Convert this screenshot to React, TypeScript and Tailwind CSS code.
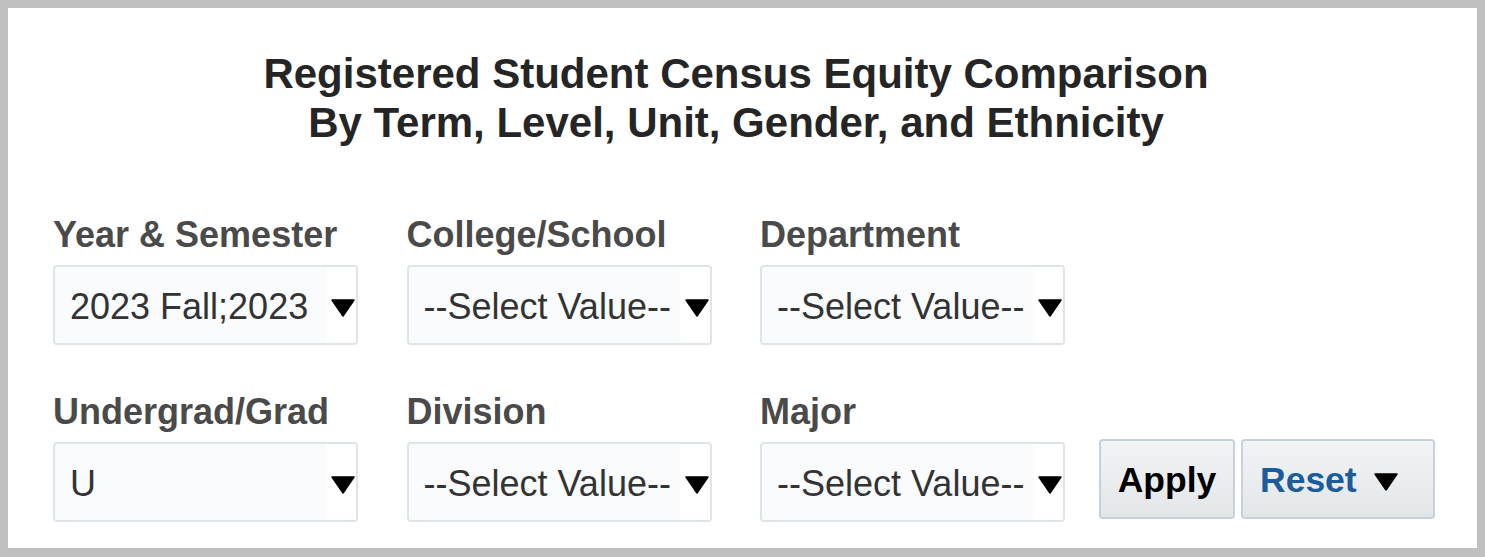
const selectFont = { fontFamily: '"Liberation Sans", Arial, sans-serif' }

type Field = { label: string; value: string }

const rowOne: Field[] = [
  { label: 'Year & Semester', value: '2023 Fall;2023' },
  { label: 'College/School', value: '--Select Value--' },
  { label: 'Department', value: '--Select Value--' },
]

const rowTwo: Field[] = [
  { label: 'Undergrad/Grad', value: 'U' },
  { label: 'Division', value: '--Select Value--' },
  { label: 'Major', value: '--Select Value--' },
]

function Caret({ className }: { className?: string }) {
  return (
    <svg viewBox="0 0 24 18" className={className}>
      <path d="M1 1 H23 L12 17 Z" fill="#000" stroke="#000" strokeWidth="1.5" strokeLinejoin="round" />
    </svg>
  )
}

function Prompt({ label, value }: Field) {
  return (
    <div className="flex w-[305px] flex-col">
      <label className="mb-[11px] h-[41px] text-[36px] font-bold leading-[44px] text-[#4a4a4a]">{label}</label>
      <div className="flex h-[80px] items-stretch overflow-hidden rounded-[4px] border-2 border-[#dfe4e9] bg-[#f9fbfd]">
        <div className="flex flex-1 items-center whitespace-nowrap pl-[15px] pt-[3px] text-[36px] text-[#333]">{value}</div>
        <div className="flex w-[30px] items-center justify-end bg-white pr-[1px] pt-[6px]">
          <Caret className="h-[18px] w-[24px]" />
        </div>
      </div>
    </div>
  )
}

export default function App() {
  return (
    <div className="flex h-[557px] w-[1485px] flex-col bg-[#c0c0c0] pb-[9px] pl-2 pr-2 pt-2" style={selectFont}>
      <div className="flex flex-1 flex-col bg-white">
        <h1 className="pr-[13px] pt-[41px] text-center text-[42px] font-bold leading-[49px] text-[#252525]">
          Registered Student Census Equity Comparison
          <br />
          By Term, Level, Unit, Gender, and Ethnicity
        </h1>

        <div className="mt-[66px] flex gap-[48.5px] pl-[45px]">
          {rowOne.map(f => <Prompt key={f.label} {...f} />)}
        </div>

        <div className="mt-[45px] flex items-end pl-[45px]">
          <div className="flex gap-[48.5px]">
            {rowTwo.map(f => <Prompt key={f.label} {...f} />)}
          </div>
          <div className="mb-[3px] ml-[34px] flex gap-[6px]">
            <button className="h-[80px] w-[136px] rounded-[4px] border-2 border-[#c6d1dc] bg-gradient-to-b from-[#f2f3f5] to-[#e3e6e9] pt-[4px] text-[35.5px] font-bold text-black">
              Apply
            </button>
            <button className="flex h-[80px] w-[194px] items-center rounded-[4px] border-2 border-[#c6d1dc] bg-gradient-to-b from-[#f2f3f5] to-[#e3e6e9] pl-[17px] pt-[4px] text-[35.5px] font-bold text-[#1a5c9c]">
              Reset
              <Caret className="ml-[17px] mt-[2px] h-[18px] w-[24px]" />
            </button>
          </div>
        </div>
      </div>
    </div>
  )
}
